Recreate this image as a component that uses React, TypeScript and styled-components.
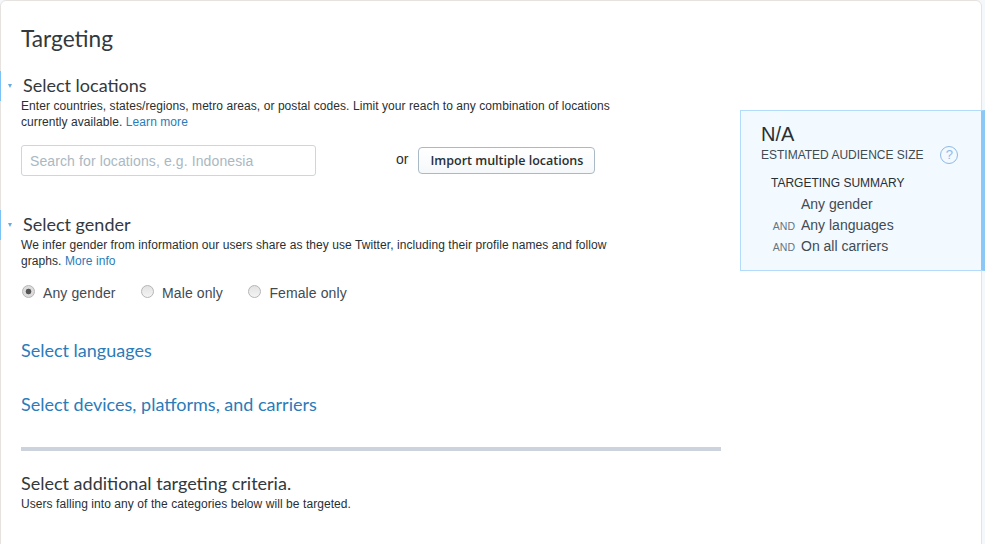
import React from "react";
import styled, {createGlobalStyle} from "styled-components";

const GlobalStyle = createGlobalStyle`
  html, body {
    margin: 0;
    height: 544px;
    overflow: hidden;
    background: #f5f8fa;
    font-family: "Liberation Sans", Arial, sans-serif;
    color: #292f33;
  }
`;

const Card = styled.div`
  box-sizing: border-box;
  display: flex;
  width: 982px;
  height: 560px;
  background: white;
  border: 1px solid #e6e2e0;
  border-radius: 6px;
`;

const Main = styled.main`
  flex: none;
  width: 700px;
  margin-left: 20px;
`;

const Title = styled.h1`
  margin: 24px 0 0;
  font: 400 22.7px/28px Lato, sans-serif;
  color: #33393d;
`;

const Section = styled.section<{ $top: number }>`
  position: relative;
  margin-top: ${p => p.$top}px;
  &::before {
    content: "";
    position: absolute;
    left: -21px;
    top: -2px;
    width: 1px;
    height: 30px;
    background: #7cc3f5;
  }
  &::after {
    content: "";
    position: absolute;
    left: -13px;
    top: 11px;
    border-left: 2.5px solid transparent;
    border-right: 2.5px solid transparent;
    border-top: 4px solid #6aa9dc;
  }
`;

const Heading = styled.h2`
  margin: 0 0 0 2px;
  font: 400 18px/24px Lato, sans-serif;
  color: #33393d;
`;

const Help = styled.p`
  width: 600px;
  margin: 1px 0 0;
  font-size: 12px;
  line-height: 16px;
  letter-spacing: 0.07px;
  color: #292f33;
`;

const Link = styled.a`
  color: #2b7bb9;
`;

const SearchRow = styled.div`
  display: flex;
  align-items: center;
  margin-top: 15px;
`;

const Search = styled.input`
  box-sizing: border-box;
  width: 295px;
  height: 31px;
  padding: 0 8px;
  border: 1px solid #ccd6dd;
  border-radius: 3px;
  font: 14px "Liberation Sans", Arial, sans-serif;
  letter-spacing: 0.11px;
  &::placeholder {
    color: #aab8c2;
    opacity: 1;
  }
`;

const Or = styled.span`
  margin: -3px 0 0 80px;
  font-size: 14px;
  color: #292f33;
`;

const Button = styled.button`
  box-sizing: border-box;
  height: 27px;
  width: 177px;
  margin-left: 10px;
  padding: 0;
  border: 1px solid #a9bac6;
  border-radius: 4px;
  background: linear-gradient(#fff, #f5f8fa);
  font: 600 12.5px "Open Sans", sans-serif;
  color: #292f33;
`;

const Radios = styled.div`
  display: flex;
  margin-top: 14px;
`;

const RadioLabel = styled.label`
  display: flex;
  align-items: center;
  margin-right: 24.5px;
  font-size: 14px;
  line-height: 20px;
  letter-spacing: 0.1px;
  color: #414b52;
`;

const RadioDot = styled.span<{ $checked?: boolean }>`
  box-sizing: border-box;
  width: 13px;
  height: 13px;
  margin: -4px 8px 0 1px;
  border-radius: 50%;
  border: 1px solid #b5b5b5;
  background: ${p => p.$checked
    ? "radial-gradient(circle, #555 0 2.5px, #dcdcdc 3.2px)"
    : "linear-gradient(#e2e2e2, #f4f4f4)"};
`;

const Expand = styled.a<{ $top: number }>`
  display: block;
  margin-top: ${p => p.$top}px;
  font: 400 18px/24px Lato, sans-serif;
  color: #2b7bb9;
`;

const Rule = styled.hr`
  height: 4px;
  margin: 31px 0 0;
  border: 0;
  background: #ccd3dc;
`;

const Additional = styled.h2`
  margin: 20px 0 0;
  font: 400 18px/24px Lato, sans-serif;
  color: #33393d;
`;

const Summary = styled.aside`
  box-sizing: border-box;
  flex: none;
  width: 245px;
  height: 161px;
  margin: 109px 0 0 19px;
  padding: 11px 0 0 20px;
  background: #f2f9ff;
  border: 1px solid #b3dcfb;
  border-right: 4px solid #8cc8f6;
`;

const Audience = styled.div`
  font-size: 20px;
  line-height: 24px;
  color: #292f33;
`;

const AudienceRow = styled.div`
  display: flex;
  align-items: center;
  font-size: 12px;
  line-height: 18px;
  color: #414b52;
`;

const HelpIcon = styled.span`
  box-sizing: border-box;
  width: 18px;
  height: 18px;
  margin-left: 17px;
  border: 1px solid #8fb8e8;
  border-radius: 50%;
  color: #8fb8e8;
  font-size: 13px;
  line-height: 16px;
  text-align: center;
`;

const SummaryTitle = styled.div`
  margin: 10px 0 2px 10px;
  font-size: 12px;
  line-height: 18px;
  color: #292f33;
`;

const SummaryRow = styled.div`
  display: flex;
  align-items: baseline;
  height: 21px;
  font-size: 14px;
  line-height: 21px;
  color: #414b52;
`;

const And = styled.span`
  width: 40px;
  padding-right: 6px;
  box-sizing: border-box;
  text-align: right;
  font-size: 10.5px;
  color: #66757f;
`;

function App() {
    return (
        <>
            <GlobalStyle/>
            <Card>
                <Main>
                    <Title>Targeting</Title>
                    <Section $top={20}>
                        <Heading>Select locations</Heading>
                        <Help>
                            Enter countries, states/regions, metro areas, or postal codes. Limit your reach to any
                            combination of locations currently available. <Link>Learn more</Link>
                        </Help>
                        <SearchRow>
                            <Search placeholder="Search for locations, e.g. Indonesia"/>
                            <Or>or</Or>
                            <Button>Import multiple locations</Button>
                        </SearchRow>
                    </Section>
                    <Section $top={36}>
                        <Heading>Select gender</Heading>
                        <Help>
                            We infer gender from information our users share as they use Twitter, including their
                            profile names and follow graphs. <Link>More info</Link>
                        </Help>
                        <Radios>
                            <RadioLabel><RadioDot $checked/>Any gender</RadioLabel>
                            <RadioLabel><RadioDot/>Male only</RadioLabel>
                            <RadioLabel><RadioDot/>Female only</RadioLabel>
                        </Radios>
                    </Section>
                    <Expand $top={35}>Select languages</Expand>
                    <Expand $top={30}>Select devices, platforms, and carriers</Expand>
                    <Rule/>
                    <Additional>Select additional targeting criteria.</Additional>
                    <Help>Users falling into any of the categories below will be targeted.</Help>
                </Main>
                <Summary>
                    <Audience>N/A</Audience>
                    <AudienceRow>ESTIMATED AUDIENCE SIZE<HelpIcon>?</HelpIcon></AudienceRow>
                    <SummaryTitle>TARGETING SUMMARY</SummaryTitle>
                    <SummaryRow><And/>Any gender</SummaryRow>
                    <SummaryRow><And>AND</And>Any languages</SummaryRow>
                    <SummaryRow><And>AND</And>On all carriers</SummaryRow>
                </Summary>
            </Card>
        </>
    );
}

export default App;
